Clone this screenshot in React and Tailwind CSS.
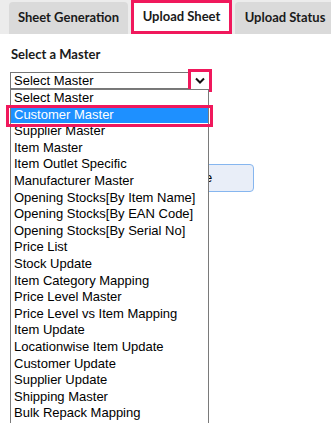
import React from 'react';

const masters = [
  'Select Master',
  'Customer Master',
  'Supplier Master',
  'Item Master',
  'Item Outlet Specific',
  'Manufacturer Master',
  'Opening Stocks[By Item Name]',
  'Opening Stocks[By EAN Code]',
  'Opening Stocks[By Serial No]',
  'Price List',
  'Stock Update',
  'Item Category Mapping',
  'Price Level Master',
  'Price Level vs Item Mapping',
  'Item Update',
  'Locationwise Item Update',
  'Customer Update',
  'Supplier Update',
  'Shipping Master',
  'Bulk Repack Mapping',
];

function Tabs() {
  return (
    <div className="flex items-end h-[34px] bg-[#ececec] pl-[9px] gap-[3px] font-['Lato',sans-serif] font-bold text-[13px] text-[#1a1a1a]">
      <div className="w-[119px] h-[32px] bg-[#dadada] rounded-t-[4px] flex items-center justify-center">
        Sheet Generation
      </div>
      <div className="w-[101px] h-[34px] bg-white border-[3px] border-[#f0185c] flex items-center justify-center">
        Upload Sheet
      </div>
      <div className="flex-1 h-[32px] bg-[#dadada] rounded-tl-[4px] flex items-center justify-center pl-[4px]">
        Upload Status
      </div>
    </div>
  );
}

function App() {
  return (
    <div className="relative w-[331px] h-[423px] overflow-hidden bg-white">
      <Tabs />
      <div className="px-[11px] pt-[12px]">
        <div className="font-['Lato',sans-serif] font-bold text-[13px] text-[#1a1a1a] leading-[16px]">
          Select a Master
        </div>
        <div className="mt-[10px] ml-[-1px] w-[200px] h-[17px] border border-[#767676] font-['Liberation_Sans',Arial,sans-serif] text-[13px] leading-[15px] text-black pl-[3px]">
          Select Master
        </div>
        <div className="mt-[75px] ml-[98px] w-[145px] h-[28px] rounded-[4px] border border-[#86b6ef] bg-[#e9eef8] flex items-center justify-center pr-[8px] font-['Liberation_Sans',Arial,sans-serif] text-[13px] text-black">
          Choose File
        </div>
      </div>

      {/* annotation around the arrow */}
      <div className="absolute left-[188px] top-[69px] w-[24px] h-[23px] border-[3px] border-[#f0185c] bg-white flex items-center justify-center">
        <svg width="10" height="7" viewBox="0 0 10 7">
          <path d="M1 1.5 L5 5.5 L9 1.5" fill="none" stroke="#111" strokeWidth="2" />
        </svg>
      </div>

      {/* open options list */}
      <div className="absolute left-[10px] top-[89px] w-[199px] h-[340px] border border-[#7a7a7a] bg-white font-['Liberation_Sans',Arial,sans-serif] text-[13px] leading-[16.6px] text-black">
        {masters.map((m, i) => (
          <div
            key={m}
            className={i === 1 ? 'pl-[3px] bg-[#1e90ff] text-white' : 'pl-[3px]'}
          >
            {m}
          </div>
        ))}
      </div>

      {/* annotation around highlighted option */}
      <div className="absolute left-[6px] top-[105px] w-[207px] h-[22px] border-[3px] border-[#f0185c]" />
    </div>
  );
}

export default App;
